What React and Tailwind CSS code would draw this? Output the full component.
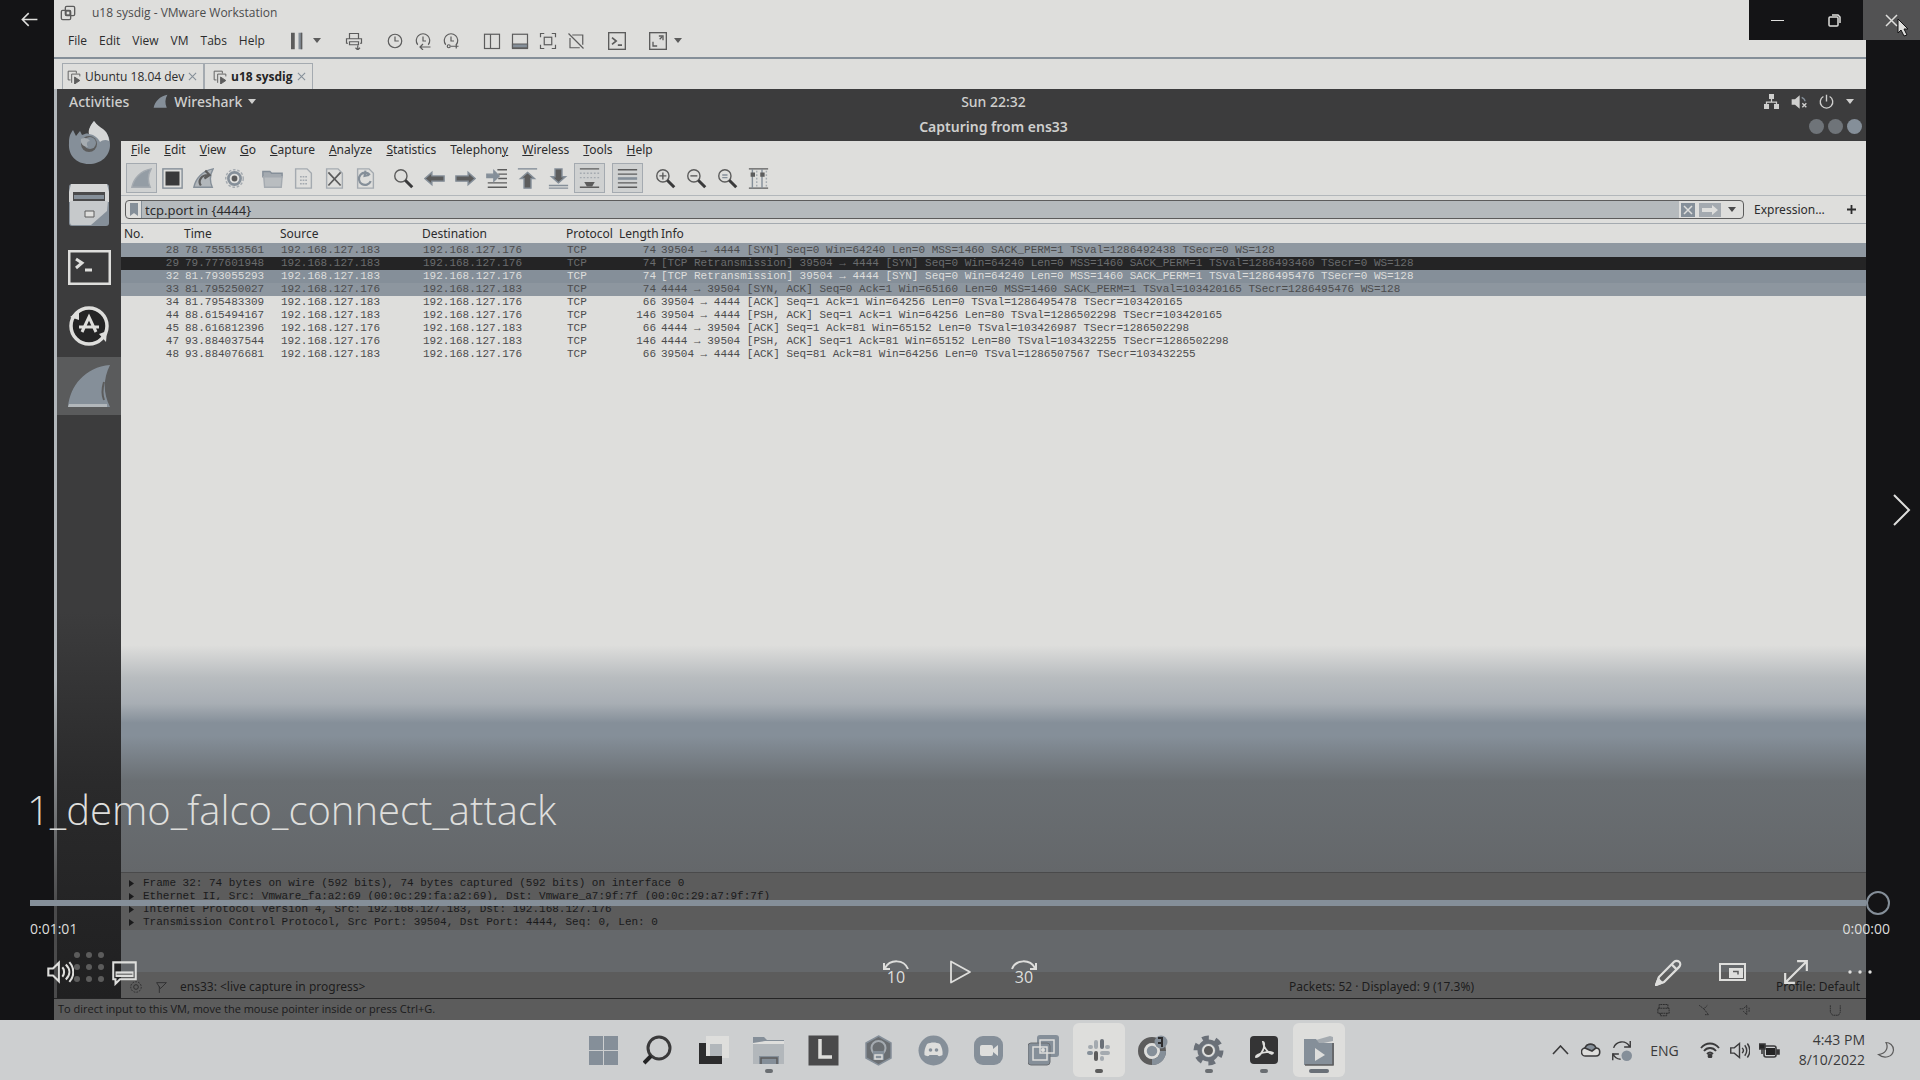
import React from "react";

const S = ({ s = 18, w, h, vb = "0 0 24 24", sw = 1.6, fill = "none", className = "", children }) => (
  <svg
    width={w || s}
    height={h || s}
    viewBox={vb}
    fill={fill}
    stroke="currentColor"
    strokeWidth={sw}
    className={"shrink-0 " + className}
    aria-hidden="true"
  >
    {children}
  </svg>
);

const B = ({ label, className = "", children }) => (
  <button type="button" aria-label={label} className={"flex shrink-0 items-center justify-center " + className}>
    {children}
  </button>
);

const Caret = ({ className = "" }) => (
  <S w={8} h={5} vb="0 0 8 5" fill="currentColor" sw={0} className={className}>
    <path d="M0 0h8L4 5z" />
  </S>
);

/* ---------- VMware host window ---------- */

const VmLogo = ({ s = 16 }) => (
  <S s={s} sw={2}>
    <rect x="8" y="2" width="14" height="14" rx="2" />
    <rect x="2" y="8" width="14" height="14" rx="2" />
    <rect x="9" y="9" width="6" height="6" />
  </S>
);

const hostIcons = [
  [
    ["Take snapshot", <><circle cx="12" cy="12" r="9" /><path d="M12 6v6h5" /></>],
    ["Revert snapshot", <><path d="M5 17a9 9 0 1 1 14 0M12 6v6h4" /><path d="M22 20H8m4-4-4 4 4 4" /></>],
    ["Manage snapshots", <><path d="M5 17a9 9 0 1 1 14 0M12 6v6h4" /><circle cx="9" cy="19" r="2" /><path d="M12 19h10m-3-3v6" /></>],
  ],
  [
    ["Show library", <><rect x="2" y="3" width="20" height="19" /><path d="M10 3v19" /></>],
    ["Show thumbnails", <><rect x="2" y="3" width="20" height="19" /><path d="M2 16h20v5H2z" fill="#858f99" /></>],
    ["Full screen", <><path d="M2 7V2h5M17 2h5v5M22 17v5h-5M7 22H2v-5" /><rect x="7" y="7" width="10" height="10" /></>],
    ["Unity", <><path d="M7 4h14v13M17 21H4V8" /><path d="m2 2 20 20" /></>],
  ],
];

function HostChrome() {
  return (
    <div className="bg-[#dededc] font-['Open_Sans','Noto_Sans',sans-serif] text-[12px] text-[#2c2c2d]">
      <div className="flex h-7 items-center gap-4 pb-0.5 pl-1.5 text-[#4c4c4d]">
        <span className="text-[#5c5c5c]"><VmLogo /></span>
        <span>u18 sysdig - VMware Workstation</span>
      </div>
      <div className="flex h-[31px] items-center border-b-2 border-[#858f99] pb-1">
        <nav className="flex w-[229px] shrink-0 items-center gap-3 pl-3.5">
          {["File", "Edit", "View", "VM", "Tabs", "Help"].map((m) => (
            <button type="button" key={m}>{m}</button>
          ))}
        </nav>
        <div className="flex items-center gap-[13px] text-[#5c5c5c]">
          <div className="flex">
            <B label="Suspend" className="w-7">
              <S s={18} fill="#5c5c5c" sw={0}><path d="M4 1h5v22H4z" /><path d="M14 1h5v22h-5z" fill="#858f99" /><path d="M17 1h2v22h-2z" /></S>
            </B>
            <B label="Power menu" className="w-3"><Caret /></B>
          </div>
          <B label="Send key" className="ml-1 w-7">
            <S><path d="M6 9V2h12v7M4 15H2V9h20v6h-2M6 13h12v4H6zM17 18v5m-3-2 3 3 3-3" /></S>
          </B>
          {hostIcons.map((g, i) => (
            <div className="flex" key={i}>
              {g.map(([n, d]) => (
                <B key={n} label={n} className="w-7"><S>{d}</S></B>
              ))}
            </div>
          ))}
          <B label="Console" className="w-7">
            <S s={20}><rect x="2" y="2" width="20" height="20" /><path d="m6 8 5 4-5 4M13 17h5" strokeWidth="2" /></S>
          </B>
          <div className="flex">
            <B label="Stretch guest" className="w-7">
              <S s={20}><rect x="2" y="2" width="20" height="20" /><path d="M6 13v5h5M18 11V6h-5" /><path d="m14 10 3-3" /></S>
            </B>
            <B label="Stretch menu" className="w-3"><Caret /></B>
          </div>
        </div>
      </div>
      <div className="flex h-[30px] items-end pl-2">
        {[["Ubuntu 18.04 dev", false], ["u18 sysdig", true]].map(([t, on]) => (
          <div
            key={t}
            className={
              "flex h-[26px] shrink-0 items-center gap-1 border border-b-0 border-[#a4aab0] " +
              (on ? "w-[109px] pl-2 font-bold text-[#242425]" : "w-[142px] pl-1")
            }
          >
            <S s={14} className="text-[#5c5c5c]">
              <path d="M6 17H2V2h14v4M8 22V7h14v4" /><path d="m13 12 9 6-9 6z" fill="currentColor" />
            </S>
            <button type="button" className="grow whitespace-nowrap text-left">{t}</button>
            <B label={"Close " + t} className="mr-1.5 text-[#858f99]">
              <S s={9} vb="0 0 10 10" sw={1.2}><path d="m1 1 8 8M9 1 1 9" /></S>
            </B>
          </div>
        ))}
      </div>
    </div>
  );
}

/* ---------- Guest desktop ---------- */

const finPath = "M1 22C3 12 11 3 23 1c-4 7-4 14-1 21z";

function GuestTopBar() {
  return (
    <div className="bg-[#3c3c3d] pl-16 font-['Noto_Sans',sans-serif] text-[14px] font-medium text-[#cfcfce]">
      <div className="grid h-[25px] grid-cols-[1fr_auto_1fr] items-center">
        <div className="-ml-16 flex items-center pl-3">
          <button type="button">Activities</button>
          <button type="button" className="ml-6 flex items-center gap-1.5">
            <S s={15} fill="#858f99" sw={0}><path d={finPath} /></S>
            <span>Wireshark</span>
            <Caret />
          </button>
        </div>
        <span className="text-[14px]">Sun 22:32</span>
        <div className="flex items-center justify-end gap-3 pr-3">
          <S s={15} fill="currentColor" sw={2}>
            <path d="M9 1h6v6H9zM1 17h6v6H1zM17 17h6v6h-6z" /><path d="M12 7v5M4 17v-4h16v4" fill="none" />
          </S>
          <S s={16} fill="currentColor" sw={0}>
            <path d="M1 8h5l7-6v20l-7-6H1z" /><path d="m17 14 6 6m0-6-6 6" stroke="currentColor" strokeWidth="2" />
            <path d="M16 5c4 2 5 4 5 6" fill="none" stroke="#858f99" strokeWidth="2" />
          </S>
          <S s={15} sw={2.2}><path d="M12 1v11M7 4a10 10 0 1 0 10 0" /></S>
          <Caret />
        </div>
      </div>
      <div className="grid h-[27px] grid-cols-[1fr_auto_1fr] items-center pb-0.5">
        <span />
        <span className="text-[14px] font-semibold">Capturing from ens33</span>
        <div className="flex justify-end gap-1 pr-1">
          {["Minimize", "Maximize", "Close"].map((n) => (
            <button type="button" key={n} aria-label={n + " window"} className="size-[15px] rounded-full bg-[#6f7479] last:bg-[#858f99]" />
          ))}
        </div>
      </div>
    </div>
  );
}

function Dock() {
  return (
    <div className="flex w-16 shrink-0 flex-col items-center bg-linear-to-b from-[#3c3c3d] from-55% via-[#2a2a2b] via-75% to-[#202021] text-[#dededc]">
      <B label="Firefox" className="-mt-[21px] h-[46px]">
        <svg width="42" height="44" viewBox="0 0 42 44">
          <path d="M21 43C8 43 0 34 1 22c0-6 1-9 4-13l3 6 4-5 2 4c3-1 5-2 7-1C21 7 23 4 26 0c4 6 7 8 9 12l3-1c3 5 4 8 4 13 0 11-9 19-21 19z" fill="#858f99" />
          <path d="M26 0c-4 5-6 9-5 13 6 1 9 4 11 8 2-2 6-3 9-1 0-4-2-9-6-12-3-2-6-4-9-8z" fill="#d5d6d6" />
          <circle cx="21" cy="23" r="8" fill="#5c5c5c" /><circle cx="22" cy="22" r="6" fill="#858f99" />
          <path d="M13 18c3-2 7-1 9 2-3 0-4 3-2 6-5 0-8-4-7-8z" fill="#a6acb1" />
        </svg>
      </B>
      <B label="Files" className="mt-4 h-[46px]">
        <svg width="40" height="42" viewBox="0 0 40 42">
          <rect width="40" height="42" rx="3" fill="#858f99" />
          <path d="M2 0h36l2 8v10H0V8z" fill="#d5d6d6" />
          <path d="M4 8h32v9H4z" fill="#4a4a4b" /><path d="M5 11h30v4H5z" fill="#858f99" />
          <path d="M1 17h38l-1 10-16 14H3c-2 0-2-2-2-4z" fill="#c6c9cb" />
          <path d="M16 27h9v6h-9z" fill="#dededc" stroke="#5c5c5c" />
        </svg>
      </B>
      <B label="Terminal" className="mt-4 h-[46px]">
        <svg width="43" height="35" viewBox="0 0 43 35">
          <rect x="1" y="1" width="41" height="33" fill="#3a3a3b" stroke="#dededc" strokeWidth="3" />
          <path d="m8 9 6 4-6 5M17 20h7" fill="none" stroke="#dededc" strokeWidth="3" />
        </svg>
      </B>
      <B label="Software updater" className="mt-[13px] h-[46px]">
        <svg width="42" height="42" viewBox="0 0 42 42">
          <circle cx="21" cy="21" r="18" fill="#242425" stroke="#dededc" strokeWidth="3.5" />
          <path d="m2 12 9-6v9zM31 29l8-3-1 11z" fill="#dededc" />
          <path d="m14 27 7-15 7 15M11 22h20" fill="none" stroke="#dededc" strokeWidth="3" />
        </svg>
      </B>
      <B label="Wireshark" className="mt-2 h-[58px] w-full bg-[#5a5b5c]">
        <svg width="42" height="44" viewBox="0 0 42 44">
          <path d="M0 43C2 22 17 3 42 1c-7 14-7 28 0 42z" fill="#858f99" />
          <path d="M1 40h38v3H0z" fill="#b2b7bb" /><path d="M36 18c-2 7-2 13 0 18" fill="none" stroke="#5c5c5c" strokeWidth="2" />
        </svg>
      </B>
      <B label="Show applications" className="mb-4 mt-auto">
        <svg width="30" height="30" viewBox="0 0 30 30" fill="#5c5c5c">
          {[3, 15, 27].map((y) => [3, 15, 27].map((x) => <circle key={x + "-" + y} cx={x} cy={y} r="3" />))}
        </svg>
      </B>
    </div>
  );
}

const docShape = <path d="M3 1h13l5 5v17H3z" stroke="#a4aab0" />;
const lens = <><circle cx="9" cy="9" r="7" stroke="#5c5c5c" /><path d="m14 14 8 8" stroke="#3a3a3b" strokeWidth="3.5" /></>;

const wsTools = [
  [
    ["Start capture", <path d={finPath} fill="#949da5" stroke="#a4aab0" />, true],
    ["Stop capture", <><rect x="1" y="1" width="22" height="22" stroke="#858f99" /><path d="M4 4h16v16H4z" fill="#3a3a3b" stroke="none" /></>],
    ["Restart capture", <><path d={finPath} fill="#b2b7bb" /><path d="M9 20c-4-6 1-12 8-12m-3-5 5 5-6 4" strokeWidth="2.5" stroke="#5c5c5c" /></>],
    ["Capture options", <><circle cx="12" cy="12" r="10" stroke="#a4aab0" strokeDasharray="3 2" /><circle cx="12" cy="12" r="7" strokeWidth="3" /><circle cx="12" cy="12" r="2.5" fill="#5c5c5c" stroke="#5c5c5c" /></>],
  ],
  [
    ["Open file", <><path d="M1 4h8l2 2h12v4H1z" fill="#a4aab0" /><path d="M2 10h21l-1 12H3z" fill="#b9bdc0" stroke="#a4aab0" /></>],
    ["Save file", <>{docShape}<path d="M8 10h9M8 14h9M8 18h9" stroke="#a4aab0" strokeDasharray="2 1" /></>],
    ["Close file", <>{docShape}<path d="m5 5 14 15M19 5 5 20" stroke="#5c5c5c" strokeWidth="2" /></>],
    ["Reload file", <>{docShape}<path d="M17 8a7 7 0 1 0 1 7M12 3l-1 6 5-1" strokeWidth="2.5" /></>],
  ],
  [
    ["Find packet", lens],
    ["Previous packet", <path d="M1 12 9 5v4h14v6H9v4z" fill="#5c5c5c" />],
    ["Next packet", <path d="m23 12-8-7v4H1v6h14v4z" fill="#5c5c5c" />],
    ["Go to packet", <><path d="M13 2h11M14 7h10M14 12h10M2 17h22M2 22h22" stroke="#5c5c5c" /><path d="M1 7h8V3l6 6-6 6v-4H1z" fill="#858f99" /></>],
    ["First packet", <><path d="M1 1h22" /><path d="m12 5 8 7h-4v11H8V12H4z" fill="#5c5c5c" /></>],
    ["Last packet", <><path d="M1 20h22M1 23h22" /><path d="m12 17-8-7h4V1h8v9h4z" fill="#5c5c5c" /></>],
    ["Auto scroll", <><path d="M1 1h22M1 22h22" stroke="#5c5c5c" /><path d="M1 6h22M1 11h22" stroke="#a4aab0" strokeDasharray="2 2" /><path d="M6 16h12l-3 5H9z" fill="#5c5c5c" stroke="none" /></>, true],
  ],
  [["Colorize", <><path d="M1 2h22M1 7h22M1 17h22M1 22h22" stroke="#5c5c5c" /><path d="M1 12h22" strokeWidth="3" /></>, true]],
  [
    ["Zoom in", <>{lens}<path d="M5 9h8M9 5v8" stroke="#5c5c5c" /></>],
    ["Zoom out", <>{lens}<path d="M5 9h8" stroke="#5c5c5c" /></>],
    ["Normal size", <>{lens}<path d="M6 8h6M6 11h6" /></>],
    ["Resize columns", <><path d="M1 1h22M1 23h22" stroke="#5c5c5c" /><path d="M5 1v22M16 1v22" /><path d="M10 3v19M21 3v19" strokeDasharray="2 2" stroke="#a4aab0" /><path d="M3 5h5v5H3zM14 5h5v5h-5z" fill="#5c5c5c" stroke="none" /></>],
  ],
];

const IP1 = "192.168.127.183";
const IP2 = "192.168.127.176";
const rows = [
  ["28", "78.755513561", IP1, IP2, "74", "39504 → 4444 [SYN] Seq=0 Win=64240 Len=0 MSS=1460 SACK_PERM=1 TSval=1286492438 TSecr=0 WS=128", "bg-[#8f98a1] text-[#4c4c4d]"],
  ["29", "79.777601948", IP1, IP2, "74", "[TCP Retransmission] 39504 → 4444 [SYN] Seq=0 Win=64240 Len=0 MSS=1460 SACK_PERM=1 TSval=1286493460 TSecr=0 WS=128", "bg-[#242425] text-[#6a6c6e]"],
  ["32", "81.793055293", IP1, IP2, "74", "[TCP Retransmission] 39504 → 4444 [SYN] Seq=0 Win=64240 Len=0 MSS=1460 SACK_PERM=1 TSval=1286495476 TSecr=0 WS=128", "bg-[#858f99] text-[#dededc]"],
  ["33", "81.795250027", IP2, IP1, "74", "4444 → 39504 [SYN, ACK] Seq=0 Ack=1 Win=65160 Len=0 MSS=1460 SACK_PERM=1 TSval=103420165 TSecr=1286495476 WS=128", "bg-[#8d969f] text-[#4c4c4d]"],
  ["34", "81.795483309", IP1, IP2, "66", "39504 → 4444 [ACK] Seq=1 Ack=1 Win=64256 Len=0 TSval=1286495478 TSecr=103420165", ""],
  ["44", "88.615494167", IP1, IP2, "146", "39504 → 4444 [PSH, ACK] Seq=1 Ack=1 Win=64256 Len=80 TSval=1286502298 TSecr=103420165", ""],
  ["45", "88.616812396", IP2, IP1, "66", "4444 → 39504 [ACK] Seq=1 Ack=81 Win=65152 Len=0 TSval=103426987 TSecr=1286502298", ""],
  ["47", "93.884037544", IP2, IP1, "146", "4444 → 39504 [PSH, ACK] Seq=1 Ack=81 Win=65152 Len=80 TSval=103432255 TSecr=1286502298", ""],
  ["48", "93.884076681", IP1, IP2, "66", "39504 → 4444 [ACK] Seq=81 Ack=81 Win=64256 Len=0 TSval=1286507567 TSecr=103432255", ""],
];

const details = [
  "Frame 32: 74 bytes on wire (592 bits), 74 bytes captured (592 bits) on interface 0",
  "Ethernet II, Src: Vmware_fa:a2:69 (00:0c:29:fa:a2:69), Dst: Vmware_a7:9f:7f (00:0c:29:a7:9f:7f)",
  "Internet Protocol Version 4, Src: 192.168.127.183, Dst: 192.168.127.176",
  "Transmission Control Protocol, Src Port: 39504, Dst Port: 4444, Seq: 0, Len: 0",
];

function Wireshark() {
  return (
    <div className="flex min-w-0 grow flex-col bg-[#dededc] font-['Noto_Sans',sans-serif] text-[12px] text-[#2c2c2d]">
      <nav className="flex h-5 shrink-0 items-center gap-[14px] pb-0.5 pl-2.5">
        {["File", "Edit", "View", "Go", "Capture", "Analyze", "Statistics", "Telephony", "Wireless", "Tools", "Help"].map((m) =>
          m === "Telephony" ? (
            <button type="button" key={m}>Telephon<u>y</u></button>
          ) : (
            <button type="button" key={m}><u>{m[0]}</u>{m.slice(1)}</button>
          )
        )}
      </nav>
      <div className="flex h-[35px] shrink-0 items-center gap-[7px] border-b border-[#b2b7bb] pl-[5px] text-[#858f99]">
        {wsTools.map((g, i) => (
          <div className="flex" key={i}>
            {g.map(([n, d, boxed]) => (
              <B key={n} label={n} className={"h-[30px] w-[31px] border " + (boxed ? "border-[#a4aab0] bg-[#cfd1d1]" : "border-transparent")}>
                <S s={21}>{d}</S>
              </B>
            ))}
          </div>
        ))}
      </div>
      <div className="flex h-7 shrink-0 items-center border-b border-[#a4aab0] pl-1">
        <div className="flex h-[19px] grow items-center rounded-sm border border-[#5c5c5c]">
          <B label="Bookmarks" className="h-full w-4 border-r border-[#858f99]">
            <S w={8} h={13} vb="0 0 8 13" sw={0} fill="#858f99"><path d="M0 0h8v13l-4-3-4 3z" /></S>
          </B>
          <input aria-label="Display filter" defaultValue="tcp.port in {4444}" className="h-full min-w-0 grow bg-[#b5babd] pl-[3px] text-[13px] outline-none" />
          <B label="Clear filter" className="ml-0.5 size-3.5 bg-[#858f99] text-[#dededc]">
            <S s={12} sw={3}><path d="m4 4 16 16M20 4 4 20" /></S>
          </B>
          <B label="Apply filter" className="ml-1 h-3.5 w-[22px] bg-[#a4aab0] text-[#dededc]">
            <S w={18} h={10} vb="0 0 18 10" sw={0} fill="currentColor"><path d="M1 3h10V0l6 5-6 5V7H1z" /></S>
          </B>
          <B label="Filter history" className="w-[22px] text-[#4a4a4b]"><Caret /></B>
        </div>
        <button type="button" className="w-[103px] pl-2.5 text-left">Expression…</button>
        <B label="Add filter button" className="mr-2.5">
          <S s={9} vb="0 0 10 10" sw={2}><path d="M5 0v10M0 5h10" /></S>
        </B>
      </div>
      <div className="grow bg-[linear-gradient(to_bottom,#dededc_65%,#b8bcbf_70%,#a8aeb4_74%,#858f99_77%,#858f99_79%,#6a6f73_86%,#64676a_100%)]">
        <table className="w-full table-fixed border-collapse text-left">
          <thead>
            <tr className="h-[19px] leading-[19px] *:p-0 *:font-normal *:whitespace-nowrap">
              <th className="w-[61px]"><span className="pl-[3px]">No.</span></th>
              <th className="w-[96px]"><span className="pl-[2px]">Time</span></th>
              <th className="w-[142px]"><span className="pl-[2px]">Source</span></th>
              <th className="w-[144px]"><span className="pl-[2px]">Destination</span></th>
              <th className="w-[54px]"><span className="pl-[2px]">Protocol</span></th>
              <th className="w-[40px]"><span className="pl-px">Length</span></th>
              <th><span className="pl-[3px]">Info</span></th>
            </tr>
          </thead>
          <tbody className="font-['Liberation_Mono',monospace] text-[11px] leading-[13px] text-[#4c4c4d]">
            {rows.map(([no, time, src, dst, len, info, tone]) => (
              <tr key={no} className={"h-[13px] whitespace-nowrap *:p-0 first:h-[14px] " + tone}>
                <td className="text-right"><span className="pr-[3px]">{no}</span></td>
                <td><span className="pl-[3px]">{time}</span></td>
                <td><span className="pl-[3px]">{src}</span></td>
                <td><span className="pl-[3px]">{dst}</span></td>
                <td><span className="pl-[3px]">TCP</span></td>
                <td className="text-right"><span className="pr-[2px]">{len}</span></td>
                <td className="overflow-hidden"><span className="pl-[3px]">{info}</span></td>
              </tr>
            ))}
          </tbody>
        </table>
      </div>
      <div className="shrink-0 border-t border-[#4a4a4b] bg-[#5c5c5c] pt-1 pb-px font-['Liberation_Mono',monospace] text-[11px] leading-[13px] text-[#1a1a1b]">
        {details.map((d) => (
          <div key={d} className="flex items-center gap-[9px] pl-2 whitespace-nowrap">
            <S w={5} h={7} vb="0 0 5 7" sw={0} fill="currentColor"><path d="M0 0v7l5-3.5z" /></S>
            <span>{d}</span>
          </div>
        ))}
      </div>
      <div className="h-[42px] shrink-0 bg-[#65686b]" />
      <div className="flex h-[26px] shrink-0 items-center bg-[#5c5c5c] pt-1 pl-2 pr-1.5 text-[#1c1c1d]">
        <S s={14} className="text-[#2c2c2d]"><circle cx="12" cy="12" r="9" strokeDasharray="3 2" /><circle cx="12" cy="12" r="4" /></S>
        <S s={13} className="ml-3 text-[#2c2c2d]"><path d="M3 3h18L10 14zM8 10v12" /></S>
        <span className="ml-3">ens33: &lt;live capture in progress&gt;</span>
        <span className="ml-auto w-[487px]">Packets: 52 · Displayed: 9 (17.3%)</span>
        <span>Profile: Default</span>
      </div>
    </div>
  );
}

/* ---------- Player overlay ---------- */

function PlayerControls() {
  return (
    <div className="absolute inset-x-0 bottom-0 flex flex-col font-['Open_Sans','Noto_Sans',sans-serif] text-[#dededc]">
      <h1 className="pl-[27px] text-[40px] leading-[60px] font-[350]">1_demo_falco_connect_attack</h1>
      <input
        type="range"
        aria-label="Seek"
        min="0"
        max="61"
        defaultValue="61"
        className="mt-[50px] mr-[30px] ml-[30px] h-[26px] appearance-none bg-transparent bg-[linear-gradient(#858f99,#858f99)] bg-[length:calc(100%-24px)_6px] bg-[position:left_center] bg-no-repeat [&::-webkit-slider-thumb]:size-6 [&::-webkit-slider-thumb]:appearance-none [&::-webkit-slider-thumb]:rounded-full [&::-webkit-slider-thumb]:border-2 [&::-webkit-slider-thumb]:border-[#858f99] [&::-webkit-slider-thumb]:bg-[#141416]"
      />
      <div className="flex h-6 items-center justify-between px-[30px] text-[14px]">
        <span>0:01:01</span>
        <span>0:00:00</span>
      </div>
      <div className="grid h-20 grid-cols-[1fr_auto_1fr] items-start pt-3.5">
        <div className="flex pl-7">
          <B label="Volume" className="h-9 w-16">
            <S s={28} sw={1.8}><path d="M2 9h4l5-5v16l-5-5H2zM14 8c2 2 2 6 0 8M17 5.500c4 4 4 9 0 13M20 3.500c4.500 5 4.500 12 0 17" /></S>
          </B>
          <B label="Subtitles" className="h-9 w-16">
            <S s={27} sw={1.8}><path d="M2 3h20v15H8l-4 4v-4H2z" /><path d="M4 11h16v5H4z" fill="#dededc" stroke="none" /><path d="M5 13.500h14" stroke="#5c5c5c" strokeWidth="1" /></S>
          </B>
        </div>
        <div className="flex">
          <B label="Back 10 seconds" className="h-9 w-16 flex-col">
            <S w={26} h={10} vb="0 0 26 10" sw={2}><path d="M25 9C21-1 7-1 2 8M1 3v6h6" /></S>
            <span className="text-[16px] leading-3.5">10</span>
          </B>
          <B label="Play" className="h-9 w-16">
            <S s={24} sw={1.8}><path d="M3 1.500v21L22 12z" strokeLinejoin="round" /></S>
          </B>
          <B label="Forward 30 seconds" className="h-9 w-16 flex-col">
            <S w={26} h={10} vb="0 0 26 10" sw={2}><path d="M1 9C5-1 19-1 24 8M25 3v6h-6" /></S>
            <span className="text-[16px] leading-3.5">30</span>
          </B>
        </div>
        <div className="flex justify-end pr-7">
          <B label="Edit" className="h-9 w-16">
            <S s={27} sw={2}><path d="M1 23 3.500 16 17 2.500a3 3 0 0 1 4.500 4.500L8 20.500z" /><path d="m15 5 4 4M1 23l5-2-3-3z" fill="currentColor" /></S>
          </B>
          <B label="Mini view" className="h-9 w-16">
            <S w={27} h={18} vb="0 0 27 18" sw={2}><rect x="1" y="1" width="25" height="16" /><rect x="11" y="6" width="12" height="8" fill="#dededc" /><path d="M14 8.500h5v3" stroke="#5c5c5c" strokeWidth="1.500" /></S>
          </B>
          <B label="Full screen" className="h-9 w-16">
            <S s={26} sw={2}><path d="M2 22 22 2M13 2h9v9M2 13v9h9" /></S>
          </B>
          <B label="More" className="h-9 w-16">
            <S w={24} h={4} vb="0 0 24 4" sw={0} fill="currentColor"><circle cx="2" cy="2" r="1.700" /><circle cx="12" cy="2" r="1.700" /><circle cx="22" cy="2" r="1.700" /></S>
          </B>
        </div>
      </div>
    </div>
  );
}

/* ---------- Windows taskbar ---------- */

const apps = [
  ["Start", "", "", <><rect x="1" y="1" width="14" height="14" fill="#858f99" /><rect x="16" y="1" width="14" height="14" fill="#858f99" /><rect x="1" y="16" width="14" height="14" fill="#858f99" /><rect x="16" y="16" width="14" height="14" fill="#858f99" /></>],
  ["Search", "", "", <><circle cx="16" cy="13" r="11" fill="none" stroke="#3a3a3b" strokeWidth="3" /><path d="m8 21-7 7" stroke="#242425" strokeWidth="4" /></>],
  ["Task view", "", "", <><path d="M8 1h23v22H8z" fill="#dededc" /><path d="M12 9h12v12H12z" fill="#b2b7bb" /><path d="M1 8h7v13h16v8H1z" fill="#2c2c2d" /></>],
  ["File Explorer", "", "w-2 bg-[#6a6e72]", <><path d="M0 2h11l3 3h17v8H0z" fill="#858f99" /><path d="M12 6h19v3H0V8z" fill="#dededc" /><path d="M0 9h31v20H0z" fill="#b2b7bb" /><path d="M6 21h20v8H6z" fill="#858f99" /><path d="M8 29v-6h16v6" fill="none" stroke="#5c5c5c" strokeWidth="1.500" /></>],
  ["Lenovo", "", "", <><rect x="0.500" y="0.500" width="30" height="30" fill="#4a4a4b" /><path d="M12 4v18h12" fill="none" stroke="#dededc" strokeWidth="3.500" /></>],
  ["Hex editor", "", "", <><path d="M15.500 1 28 8v15l-12.500 7L3 23V8z" fill="#6a6e72" stroke="#858f99" strokeWidth="1.500" /><circle cx="15.500" cy="13" r="7" fill="none" stroke="#a4aab0" strokeWidth="2" /><path d="M10 16h11v9H10z" fill="#858f99" /><path d="M12 20h7v4h-7z" fill="none" stroke="#dededc" strokeWidth="1.500" /></>],
  ["Discord", "", "", <><circle cx="15.500" cy="15.500" r="15" fill="#858f99" /><path d="M9 9c4-2 9-2 13 0 2 4 3 7 2.500 11-2 1-4 2-5 0h-8c-1 2-3 1-5 0C6 16 7 13 9 9z" fill="#dededc" /><circle cx="12.500" cy="15" r="1.800" fill="#858f99" /><circle cx="18.500" cy="15" r="1.800" fill="#858f99" /></>],
  ["Zoom", "", "", <><rect x="1" y="1" width="29" height="29" rx="9" fill="#858f99" /><rect x="7" y="10" width="13" height="11" rx="2" fill="#dededc" /><path d="m20 14 5-4v11l-5-4z" fill="#dededc" /></>],
  ["VMware", "", "", <><rect x="9" y="0" width="22" height="22" rx="3" fill="#858f99" /><rect x="0" y="8" width="22" height="22" rx="3" fill="#858f99" stroke="#6a6e72" /><rect x="12" y="5" width="14" height="13" fill="none" stroke="#dededc" strokeWidth="1.500" /><rect x="5" y="12" width="14" height="13" fill="none" stroke="#dededc" strokeWidth="1.500" /><circle cx="15" cy="15" r="2" fill="#dededc" /></>],
  ["Slack", "bg-[#dededc]", "w-2 bg-[#5c5c5c]", <g strokeLinecap="round" strokeWidth="4" fill="none"><path d="M13 7v5M7 12h1" stroke="#a4aab0" /><path d="M19 6v6" stroke="#6a7078" /><path d="M24 12h1M19 18h6" stroke="#a4aab0" /><path d="M6 18h2" stroke="#858f99" /><path d="M13 18v6" stroke="#5c5c5c" /><path d="M19 23v1" stroke="#a4aab0" /></g>],
  ["Chrome", "", "", <><circle cx="14" cy="16" r="11" fill="none" stroke="#5c5c5c" strokeWidth="6" /><path d="M14 27c7 0 11-5 11-11" fill="none" stroke="#858f99" strokeWidth="6" /><circle cx="14" cy="16" r="6.500" fill="#858f99" stroke="#dededc" strokeWidth="2.500" /><circle cx="23" cy="7" r="6.500" fill="#858f99" /><path d="M20 3h4v9m-4-4h5" fill="none" stroke="#2c2c2d" strokeWidth="2" /></>],
  ["Settings", "", "w-2 bg-[#6a6e72]", <><circle cx="15.500" cy="15.500" r="12.500" fill="none" stroke="#6a7078" strokeWidth="5" strokeDasharray="6.540 6.540" /><circle cx="15.500" cy="15.500" r="9" fill="#858f99" stroke="#6a7078" strokeWidth="4" /><circle cx="15.500" cy="15.500" r="5.500" fill="#5c5c5c" stroke="#dededc" strokeWidth="2" /></>],
  ["Acrobat", "", "w-2 bg-[#6a6e72]", <><rect x="2" y="1" width="28" height="28" rx="4" fill="#343435" /><path d="M15 7c2 0 1 6 0 8-2 4-5 7-7 7-1-3 14-7 17-4-1 3-9-3-10-11z" fill="none" stroke="#dededc" strokeWidth="1.800" /></>],
  ["Movies", "bg-[#dededc]", "w-5 bg-[#6a7078]", <><path d="m13 5 14-4 3 1v4l-14 3z" fill="#a4aab0" /><path d="M1 4h12l3 4h15v22H1z" fill="#858f99" /><path d="M2 30h28V8" fill="none" stroke="#5c5c5c" strokeWidth="1.500" /><path d="m12 13 10 7-10 6z" fill="#dededc" /></>],
];

function Taskbar() {
  return (
    <footer className="grid h-[60px] shrink-0 grid-cols-[1fr_auto_1fr] items-center bg-[#cdcfd0] font-['Open_Sans','Noto_Sans',sans-serif] text-[#3a3a3b]">
      <span />
      <div className="flex pl-0.5">
        {apps.map(([n, bg, mark, d]) => (
          <div key={n} className="w-[55px]">
            <B label={n} className={"relative mx-auto h-[54px] w-[52px] rounded-md " + bg}>
              <svg width="31" height="31" viewBox="0 0 31 31" aria-hidden="true">{d}</svg>
              {mark && <span className={"absolute bottom-1 h-1 rounded-full " + mark} />}
            </B>
          </div>
        ))}
      </div>
      <div className="flex items-center justify-end pr-[25px]">
        <B label="Hidden icons" className="mr-px w-[30px]"><S w={17} h={10} vb="0 0 17 10"><path d="m1 9 7.500-8L16 9" /></S></B>
        <B label="OneDrive" className="w-[30px]">
          <S w={20} h={14} vb="0 0 20 14"><path d="M5 13a4 4 0 0 1-1-8c2-5 9-5 11 0 5 0 5 8 0 8z" fill="#dededc" /><path d="M4 5c2-5 9-5 11 0l-4 3z" fill="#858f99" /></S>
        </B>
        <B label="Updates" className="w-[30px]">
          <S s={21}><path d="M3 9a10 10 0 0 1 18-2M22 1v7h-7M2 15a10 10 0 0 0 9 7M2 23v-7h7" /><circle cx="18" cy="18" r="6" fill="#858f99" stroke="none" /></S>
        </B>
        <button type="button" className="ml-3.5 text-[14px]">ENG</button>
        <div className="ml-4 flex">
          <B label="Network" className="w-[30px]">
            <S w={20} h={16} vb="0 0 20 16" sw={1.8}><path d="M1 6c5-6 13-6 18 0M4 9c3-4 9-4 12 0M7 12c2-2 4-2 6 0" /><circle cx="10" cy="14" r="1.500" fill="currentColor" /></S>
          </B>
          <B label="Speakers" className="w-[30px]">
            <S s={21}><path d="M2 9h4l6-5v16l-6-5H2zM15 9c2 2 2 4 0 6M18 6c3 4 3 8 0 12M21 4c3.500 5 3.500 11 0 16" /></S>
          </B>
          <B label="Battery" className="w-[30px]">
            <S w={21} h={15} vb="0 0 21 15"><rect x="5" y="3" width="12" height="11" rx="2" /><path d="M7 5h9v7H7z" fill="#242425" stroke="none" /><path d="M18 7h2v4h-2z" fill="#242425" /><path d="M0 1h6v5H0zM3 6v5" fill="#242425" /></S>
          </B>
        </div>
        <div className="ml-3.5 text-right text-[14px] leading-5">
          <div>4:43 PM</div>
          <div>8/10/2022</div>
        </div>
        <B label="Focus assist" className="ml-3">
          <S s={18} className="text-[#5c5c5c]"><path d="M12 2c4 8-1 15-10 16 7 6 19 4 20-6 0-6-5-10-10-10z" /></S>
        </B>
      </div>
    </footer>
  );
}

export default function App() {
  return (
    <div className="flex h-screen flex-col overflow-hidden bg-[#141416]">
      <main className="relative flex min-h-0 grow">
        <div className="w-[54px] shrink-0 pt-2.5 text-center">
          <B label="Back" className="ml-5 text-[#dededc]">
            <S s={19} sw={2}><path d="M22 12H3m8-8-8 8 8 8" /></S>
          </B>
        </div>
        <section className="flex min-w-0 grow flex-col">
          <HostChrome />
          <div className="flex min-h-0 grow">
            <div className="w-[3px] shrink-0 bg-linear-to-b from-[#b2b7bb] from-65% to-[#4a4a4b] to-90%" />
            <div className="flex min-w-0 grow flex-col">
              <GuestTopBar />
              <div className="flex min-h-0 grow">
                <Dock />
                <Wireshark />
              </div>
            </div>
          </div>
          <div className="flex h-[22px] shrink-0 items-center border-t border-[#242425] bg-[#5c5c5c] pl-1 font-['Open_Sans','Noto_Sans',sans-serif] text-[11px] text-[#1a1a1b]">
            <span>To direct input to this VM, move the mouse pointer inside or press Ctrl+G.</span>
            <div className="ml-auto flex items-center pr-3 text-[#2c2c2d]">
              <S s={15} className="mr-[27px]"><path d="M5 10V4h14v6M3 10h18v8H3zM7 18v4h10v-4" strokeDasharray="3 1" /></S>
              <S s={14} className="mr-[26px]"><path d="m2 4 8 6 6-6M10 10l8 10h-6" strokeDasharray="3 1" /></S>
              <S s={14} className="mr-[76px]"><path d="M3 10h6l6-6v16l-6-6M19 8v8" strokeDasharray="3 1" /></S>
              <S s={14} className="mr-3"><path d="M4 4v12l4 5h10l3-5V4" strokeDasharray="3 1" /></S>
            </div>
          </div>
        </section>
        <div className="flex w-[54px] shrink-0 items-center justify-center">
          <B label="Next" className="ml-[18px] text-[#dededc]">
            <S w={18} h={32} vb="0 0 18 32" sw={2}><path d="m1 1 15 15L1 31" /></S>
          </B>
        </div>

        <div className="absolute top-0 right-0 flex h-10 bg-[#141416] text-[#dededc]">
          <B label="Minimize" className="w-[57px]"><S w={13} h={1} vb="0 0 13 1" sw={2}><path d="M0 1h13" /></S></B>
          <B label="Restore" className="w-[57px]"><S s={13} vb="0 0 13 13" sw={1.5}><rect x="1" y="3" width="9" height="9" rx="1" /><path d="M4 1h6l2 2v6" /></S></B>
          <B label="Close" className="w-[57px] bg-[#525253]"><S s={13} vb="0 0 13 13" sw={1.5}><path d="m1 1 11 11M12 1 1 12" /></S></B>
          <svg width="12" height="19" viewBox="0 0 12 19" className="absolute top-[18px] right-[11px]" aria-hidden="true">
            <path d="M1 1v14l3-3 3 6 3-1-3-6h4z" fill="#dededc" stroke="#141416" />
          </svg>
        </div>

        <PlayerControls />
      </main>
      <Taskbar />
    </div>
  );
}
